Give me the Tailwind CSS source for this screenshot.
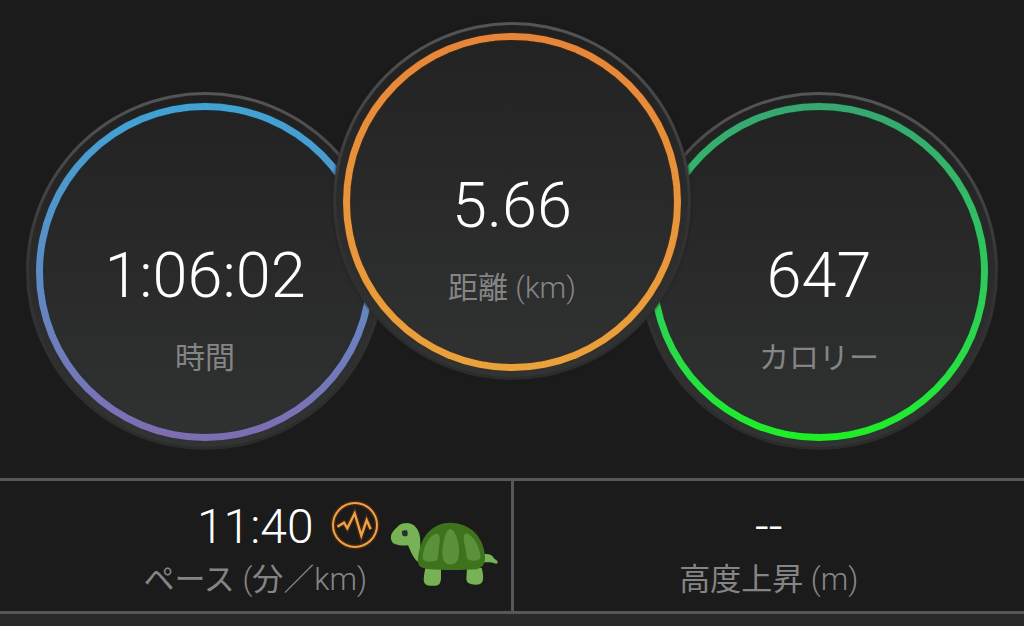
<!DOCTYPE html>
<html lang="ja">
<head>
<meta charset="utf-8">
<meta name="viewport" content="width=device-width, initial-scale=1">
<title>ランニング記録</title>
<script src="https://cdn.jsdelivr.net/npm/@tailwindcss/browser@4"></script>
</head>
<body class="min-h-screen flex flex-col bg-[#1b1b1b] text-white font-light font-['Roboto','Noto_Sans_CJK_JP',sans-serif]">
<main class="flex flex-col">
  <section class="flex justify-center items-end pt-[22px] pb-7" aria-label="サマリー">
    <div class="size-[358px] shrink-0 rounded-full bg-linear-to-b from-[#555555] via-[#353434] to-[#2b2b2b] p-[3px]">
      <div class="size-full rounded-full bg-linear-to-b from-[#202020] via-[#2b2b2b] to-[#323333] px-[7px] pt-2 pb-[6px]">
        <div class="size-full rounded-full bg-linear-to-b from-[#3fa3d3] via-[#5b8cc4] to-[#7f6cb0] p-[7px] shadow-[0_0_2px_#16384f]">
          <div class="size-full rounded-full bg-linear-to-b from-[#232323] to-[#303131] flex flex-col items-center pt-[130px] shadow-[inset_0_0_2px_#16384f]">
            <div class="text-[63px] leading-[72px]">1:06:02</div>
            <div class="mt-[26px] text-[30px] leading-10 text-[#858585] font-normal">時間</div>
          </div>
        </div>
      </div>
    </div>
    <div class="relative z-10 -mx-[51px] mb-[70px] size-[358px] shrink-0 rounded-full bg-linear-to-b from-[#555555] via-[#353434] to-[#2b2b2b] p-[3px] shadow-[0_0_3px_#1b1b1b]">
      <div class="size-full rounded-full bg-linear-to-b from-[#202020] via-[#2b2b2b] to-[#323333] px-[7px] pt-2 pb-[6px]">
        <div class="size-full rounded-full bg-linear-to-b from-[#e68539] to-[#e9a23c] p-[7px] shadow-[0_0_2px_#5a2e08]">
          <div class="size-full rounded-full bg-linear-to-b from-[#232323] to-[#303131] flex flex-col items-center pt-[130px] shadow-[inset_0_0_2px_#5a2e08]">
            <div class="text-[63px] leading-[72px]">5.66</div>
            <div class="mt-[26px] text-[30px] leading-10 text-[#858585]"><span class="font-normal">距離</span> (km)</div>
          </div>
        </div>
      </div>
    </div>
    <div class="size-[358px] shrink-0 rounded-full bg-linear-to-b from-[#555555] via-[#353434] to-[#2b2b2b] p-[3px]">
      <div class="size-full rounded-full bg-linear-to-b from-[#202020] via-[#2b2b2b] to-[#323333] px-[7px] pt-2 pb-[6px]">
        <div class="size-full rounded-full bg-linear-to-b from-[#38a673] via-[#2fc85a] to-[#1fee24] p-[7px] shadow-[0_0_2px_#0d4a18]">
          <div class="size-full rounded-full bg-linear-to-b from-[#232323] to-[#303131] flex flex-col items-center pt-[130px] shadow-[inset_0_0_2px_#0d4a18]">
            <div class="text-[63px] leading-[72px]">647</div>
            <div class="mt-[26px] text-[30px] leading-10 text-[#858585] font-normal">カロリー</div>
          </div>
        </div>
      </div>
    </div>
  </section>
  <section class="flex border-y-[3px] border-[#575757]" aria-label="詳細">
    <div class="relative flex-1 flex flex-col items-center pt-[18px] pb-[11px]">
      <div class="relative text-[48px] leading-[56px]">11:40
        <svg class="absolute left-full top-px ml-4 size-[50px]" viewBox="-75 -75 150 150" fill="none" aria-hidden="true">
          <g stroke="#6b3200" stroke-opacity=".55" stroke-width="15"><circle r="66"/><path d="M-53 5L-33-7L-23 10L-1-35L19 32L35-15L47 13"/></g>
          <g stroke="#eda24c" stroke-width="6"><circle r="66"/><path stroke-width="7" d="M-53 5L-33-7L-23 10L-1-35L19 32L35-15L47 13"/></g>
        </svg>
      </div>
      <div class="mt-1 text-[31px] leading-[41px] text-[#858585]"><span class="font-normal">ペース</span> (<span class="font-normal">分</span>／km)</div>
      <svg class="absolute left-1/2 top-[29px] ml-[125px] w-[125px] h-[85px]" viewBox="0 0 375 255" role="img" aria-label="カメ">
        <g fill="#77b255">
          <path d="M33 86C31 70 42 61 54 49C67 36 94 36 106 50C121 66 121 86 121 104L120 160C101 149 94 128 84 106C70 108 57 106 47 103C38 100 34 94 33 86Z"/>
          <path d="M308 133C323 130 337 132 341 144L352 153C356 160 350 163 343 160C331 154 319 158 307 156Z"/>
          <path d="M136 175H183V205Q183 228 164 227H149Q131 226 131 209Q132 192 136 175Z"/>
          <path d="M261 174H305Q311 195 309 209Q307 224 287 224Q260 224 259 208Z"/>
        </g>
        <path fill="#3e721d" d="M114 151C117 88 150 39 211 38C273 39 312 83 315 139C316 162 307 174 290 178C245 181 183 181 141 177C119 173 113 166 114 151Z"/>
        <g fill="#5c913b">
          <path d="M211 56C224 60 238 92 237 125C236 146 233 162 213 163C193 164 187 149 187 125C188 94 198 59 211 56Z"/>
          <path d="M128 145C129 114 145 77 168 71C181 71 181 91 178 105C174 123 177 143 171 150C160 157 130 158 128 145Z"/>
          <path d="M259 70C282 76 299 112 302 139C302 154 280 154 265 149C257 143 260 125 255 109C251 93 248 72 259 70Z"/>
        </g>
        <path fill="#292f33" d="M66 64Q70 59 81 61Q85 68 82 77Q76 80 68 77Q64 70 66 64Z"/>
      </svg>
    </div>
    <div class="w-[3px] bg-[#575757]"></div>
    <div class="flex-1 flex flex-col items-center pt-[18px] pb-[11px]">
      <div class="text-[48px] leading-[56px]">--</div>
      <div class="mt-1 text-[31px] leading-[41px] text-[#858585]"><span class="font-normal">高度上昇</span> (m)</div>
    </div>
  </section>
</main>
<div class="grow bg-[#292929]"></div>
</body>
</html>
